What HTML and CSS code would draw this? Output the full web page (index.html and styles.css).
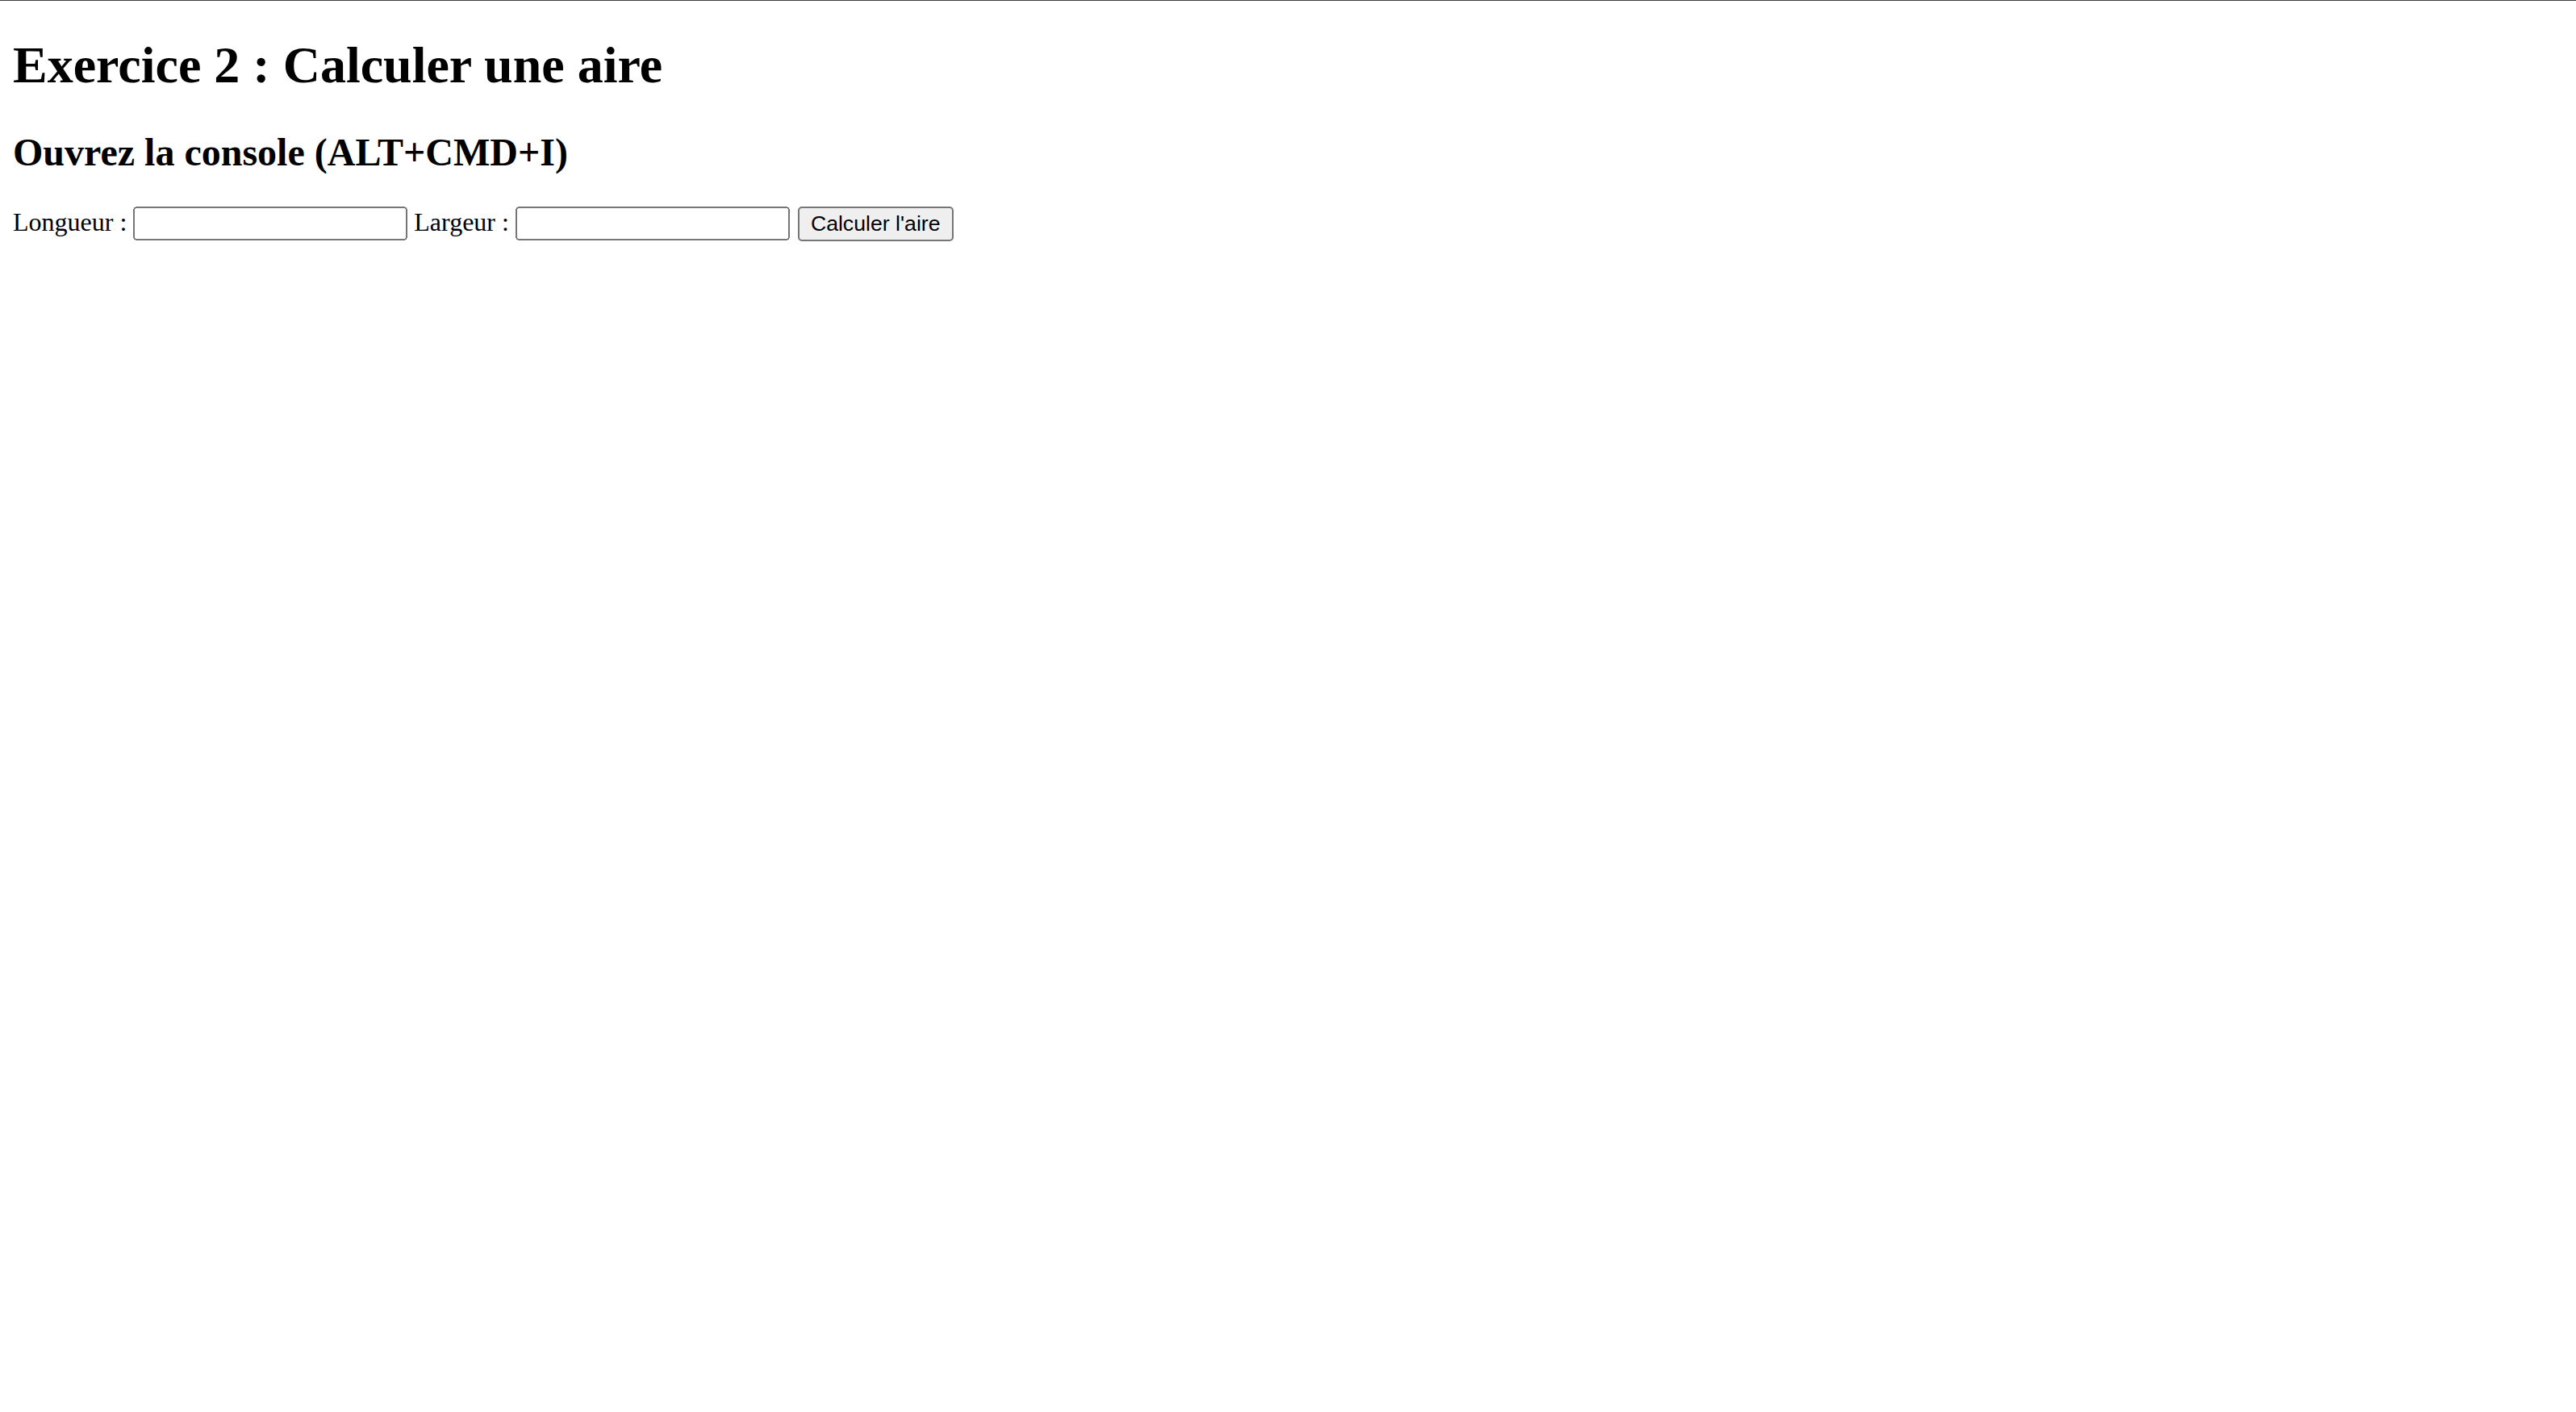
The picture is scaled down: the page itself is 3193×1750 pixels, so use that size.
FILE: index.html
```html
<!DOCTYPE html>
<html lang="fr">
<head>
<meta charset="utf-8">
<title>Exercice 2</title>
<link rel="stylesheet" href="styles.css">
</head>
<body class="page">
<h1 class="title">Exercice 2 : Calculer une aire</h1>
<h2 class="subtitle">Ouvrez la console (ALT+CMD+I)</h2>
<form class="form">
<label class="lbl" for="longueur">Longueur :</label>
<input class="field" type="text" id="longueur">
<label class="lbl" for="largeur">Largeur :</label>
<input class="field" type="text" id="largeur">
<button class="btn" type="button">Calculer l'aire</button>
</form>
</body>
</html>
```

FILE: styles.css
```css
html {
  zoom: 2;
  border-top: 0.5px solid #3c3c3c;
}
.page {
  margin: 8px;
  font-family: "Liberation Serif", "Times New Roman", serif;
  color: #000;
  background: #fff;
}
.title {
  font-size: 2em;
  font-weight: bold;
  margin: 13.5px 0 21.44px;
}
.subtitle {
  font-size: 1.5em;
  font-weight: bold;
  margin: 0.83em 0;
}
.form {
  margin: 0;
  font-size: 16px;
}
.field {
  box-sizing: border-box;
  width: 170px;
  height: 21px;
  font-family: "Liberation Sans", Arial, sans-serif;
  font-size: 13.33px;
}
.btn {
  font-family: "Liberation Sans", Arial, sans-serif;
  font-size: 13.33px;
  margin-left: 1px;
}
```
